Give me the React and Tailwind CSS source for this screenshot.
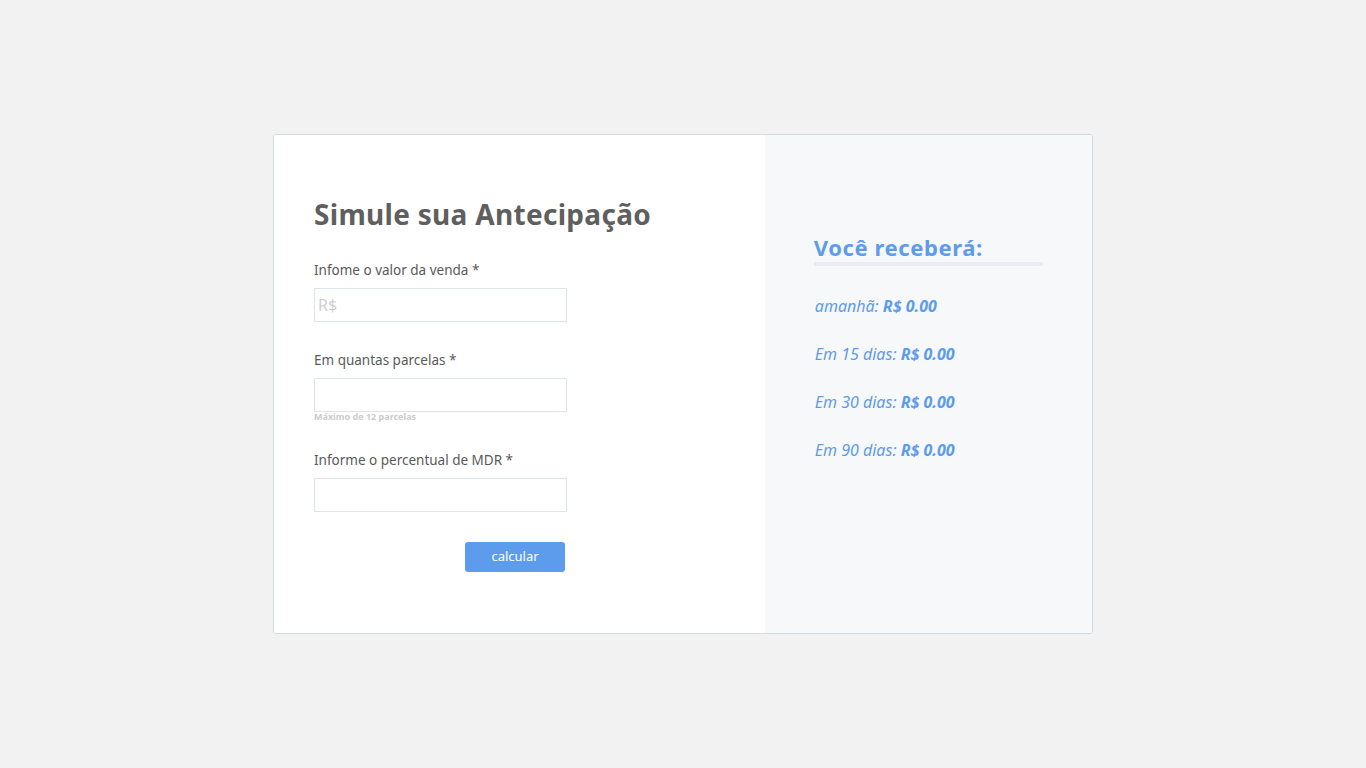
export default function App() {
  const results = [
    ['amanhã', 'R$ 0.00'],
    ['Em 15 dias', 'R$ 0.00'],
    ['Em 30 dias', 'R$ 0.00'],
    ['Em 90 dias', 'R$ 0.00'],
  ]

  return (
    <div
      className="min-h-screen bg-[#f2f2f2] flex items-center justify-center"
      style={{ fontFamily: '"Noto Sans", "Open Sans", sans-serif' }}
    >
      <div className="w-[820px] h-[500px] flex bg-white border border-[#cfdde3] rounded-[3px] overflow-hidden">
        {/* Form */}
        <div className="w-3/5 bg-white pl-10 pt-[60px]">
          <h1 className="text-[28px] leading-[38px] font-bold text-[#5f5f5f] tracking-[0.3px]">
            Simule sua Antecipação
          </h1>

          <form className="mt-[27px]">
            <label className="block text-[13.5px] leading-[20px] text-[#5a5a5a]">Infome o valor da venda *</label>
            <input
              placeholder="R$"
              className="mt-[8px] block w-[253px] h-[34px] border border-[#dce6ea] px-[3px] text-[16px] text-[#555] placeholder:text-[#cfcfcf] outline-none"
            />

            <label className="block mt-[28px] text-[13.5px] leading-[20px] text-[#5a5a5a]">Em quantas parcelas *</label>
            <input className="mt-[8px] block w-[253px] h-[34px] border border-[#dce6ea] px-[3px] text-[16px] outline-none" />
            <span className="block text-[9px] leading-[11px] font-bold text-[#cccccc] -mt-[1px]">Máximo de 12 parcelas</span>

            <label className="block mt-[28px] text-[13.5px] leading-[20px] text-[#5a5a5a]">Informe o percentual de MDR *</label>
            <input className="mt-[8px] block w-[253px] h-[34px] border border-[#dce6ea] px-[3px] text-[16px] outline-none" />

            <div className="w-[253px] flex justify-end mt-[30px]">
              <button
                type="button"
                className="w-[100px] h-[30px] mr-[2px] rounded-[3px] bg-[#5d9cec] text-white text-[13px]"
              >
                calcular
              </button>
            </div>
          </form>
        </div>

        {/* Results */}
        <div className="w-2/5 bg-[#f7f8fa] pl-[49px] pt-[98px]">
          <h2 className="w-[229px] text-[22px] leading-[28px] font-bold text-[#5d9cec] tracking-[0.6px] border-b-4 border-[#e9edf2] pb-[1px]">
            Você receberá:
          </h2>
          <div className="mt-[29px] flex flex-col gap-[26px] pl-px">
            {results.map(([label, value]) => (
              <p key={label} className="italic text-[16px] leading-[22px] text-[#5d9cec]">
                {label}: <b className="font-bold">{value}</b>
              </p>
            ))}
          </div>
        </div>
      </div>
    </div>
  )
}
